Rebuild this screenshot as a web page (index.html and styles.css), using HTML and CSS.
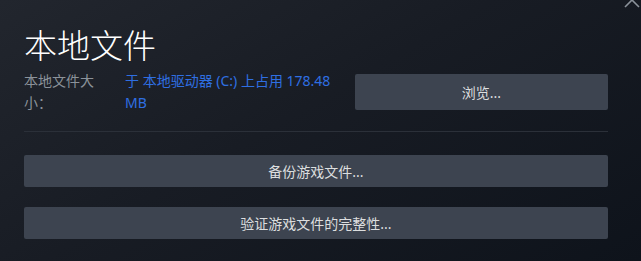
FILE: index.html
```html
<!DOCTYPE html>
<html lang="zh-CN">
<head>
<meta charset="utf-8">
<link rel="stylesheet" href="styles.css">
</head>
<body>
<div class="dialog">
  <svg class="close" width="16" height="10" viewBox="0 0 16 10"><path d="M1 -7 L15 7 M15 -7 L1 7" stroke="#8b929a" stroke-width="1.6" fill="none"/></svg>
  <h1 class="title">本地文件</h1>
  <div class="row">
    <div class="label">本地文件大小：</div>
    <div class="value">于 本地驱动器 (C:) 上占用 178.48 MB</div>
    <button class="btn btn-tall">浏览...</button>
  </div>
  <div class="sep"></div>
  <button class="btn btn-full">备份游戏文件...</button>
  <button class="btn btn-full">验证游戏文件的完整性...</button>
</div>
</body>
</html>
```
FILE: styles.css
```css
html, body {
  margin: 0;
  padding: 0;
  width: 641px;
  height: 261px;
  overflow: hidden;
}
body {
  background: linear-gradient(150deg, #22262e 0%, #181c24 45%, #0e131b 100%);
  font-family: "Noto Sans", "Noto Sans CJK SC", sans-serif;
}
.dialog {
  position: relative;
  box-sizing: border-box;
  width: 641px;
  height: 261px;
  padding: 24px 33px 0 24px;
  display: flex;
  flex-direction: column;
}
.close {
  position: absolute;
  top: 0;
  left: 624px;
}
.title {
  margin: 0;
  font-family: "Noto Sans CJK SC", sans-serif;
  font-weight: 300;
  font-size: 33px;
  line-height: 40px;
  color: #ffffff;
}
.row {
  margin-top: 6px;
  display: flex;
  align-items: center;
  font-size: 14px;
  line-height: 22px;
}
.label {
  width: 80px;
  margin-right: 21px;
  color: #8b929a;
}
.value {
  width: 222px;
  color: #2f6fe2;
}
.btn {
  border: none;
  border-radius: 2px;
  background: #3d4450;
  color: #dcdedf;
  font-family: "Noto Sans", "Noto Sans CJK SC", sans-serif;
  font-size: 14px;
  padding: 0;
  cursor: pointer;
}
.btn-tall {
  flex: 1;
  margin-left: 8px;
  height: 36px;
}
.sep {
  margin-top: 17px;
  height: 1px;
  background: #2b3039;
}
.btn-full {
  width: 100%;
  height: 32px;
  margin-top: 23px;
}
.btn-full + .btn-full {
  margin-top: 20px;
}
```
